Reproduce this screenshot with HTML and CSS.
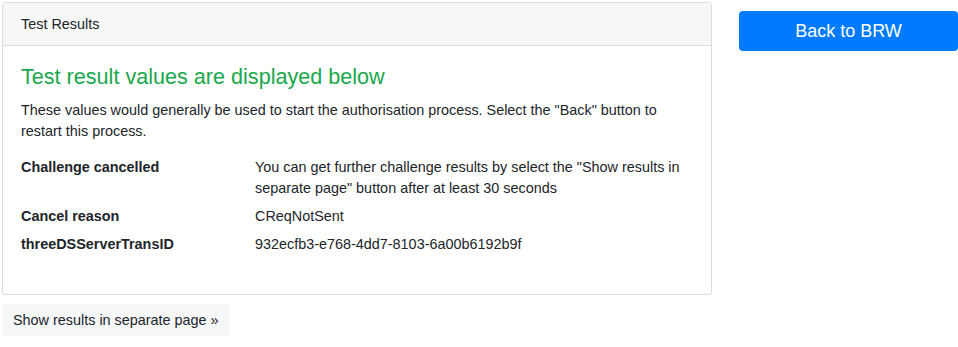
FILE: index.html
```html
<!DOCTYPE html>
<html lang="en">
<head>
    <meta charset="UTF-8">
    <title>Test Results</title>
    <link rel="stylesheet" href="styles.css">
</head>
<body>
    <div class="page">
        <div class="main">
            <div class="card">
                <div class="card-header">Test Results</div>
                <div class="card-body">
                    <h2 class="title">Test result values are displayed below</h2>
                    <p class="intro">These values would generally be used to start the authorisation process. Select the "Back" button to restart this process.</p>
                    <div class="result-row">
                        <div class="result-key">Challenge cancelled</div>
                        <div class="result-value">You can get further challenge results by select the "Show results in separate page" button after at least 30 seconds</div>
                    </div>
                    <div class="result-row">
                        <div class="result-key">Cancel reason</div>
                        <div class="result-value">CReqNotSent</div>
                    </div>
                    <div class="result-row">
                        <div class="result-key">threeDSServerTransID</div>
                        <div class="result-value">932ecfb3-e768-4dd7-8103-6a00b6192b9f</div>
                    </div>
                </div>
            </div>
            <button class="btn btn-light">Show results in separate page &raquo;</button>
        </div>
        <div class="side">
            <button class="btn btn-primary">Back to BRW</button>
        </div>
    </div>
</body>
</html>
```

FILE: styles.css
```css
body {
    margin: 0;
    padding: 2px 0 0 2px;
    font-family: "Liberation Sans", Arial, sans-serif;
    font-size: 14.4px;
    line-height: 21px;
    color: #212529;
    background: #fff;
}
.page {
    display: flex;
    gap: 27px;
}
.main {
    width: 710px;
}
.card {
    border: 1px solid #dcdcdc;
    border-radius: 3px;
    margin-bottom: 9px;
}
.card-header {
    background: #f7f7f7;
    border-bottom: 1px solid #dcdcdc;
    padding: 11px 18px 10px;
}
.card-body {
    padding: 18px 18px 32px;
}
.title {
    margin: 0 0 10px;
    font-size: 21.6px;
    line-height: 26px;
    font-weight: normal;
    color: #19a84c;
}
.intro {
    margin: 0 0 15px;
}
.result-row {
    display: flex;
    margin-bottom: 7px;
}
.result-key {
    width: 234px;
    flex-shrink: 0;
    font-weight: bold;
}
.result-value {
    flex: 1;
}
.btn {
    font-family: inherit;
    border: none;
    border-radius: 4px;
    cursor: pointer;
}
.btn-light {
    background: #f6f7f9;
    color: #212529;
    font-size: 14.4px;
    padding: 6px 11px 5px;
    line-height: 21px;
}
.btn-primary {
    background: #007bff;
    color: #fff;
    font-size: 18px;
    width: 219px;
    height: 40px;
    margin-top: 9px;
}
```
